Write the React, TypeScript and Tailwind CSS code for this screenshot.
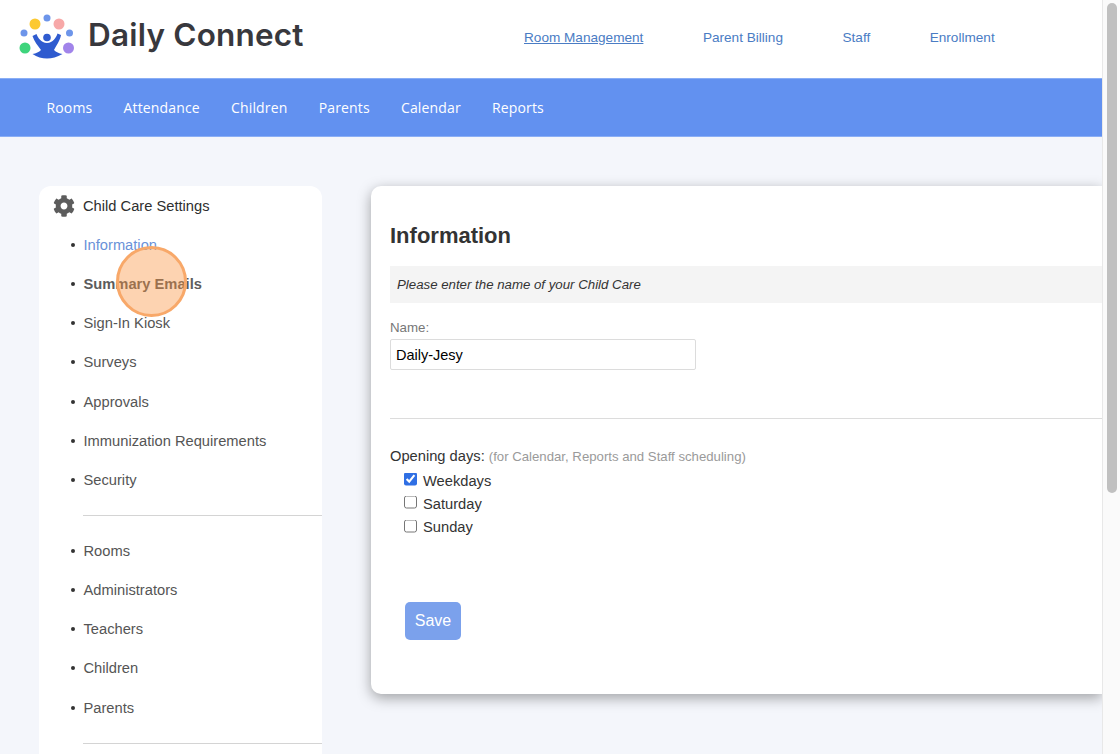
import React from "react";
import { FaCog } from "react-icons/fa";

const topLinks = [
  { t: "Room Management", cls: "underline" },
  { t: "Parent Billing", cls: "" },
  { t: "Staff", cls: "" },
  { t: "Enrollment", cls: "" },
];
const nav = ["Rooms", "Attendance", "Children", "Parents", "Calendar", "Reports"];
const group1 = ["Sign-In Kiosk", "Surveys", "Approvals", "Immunization Requirements", "Security"];
const group2 = ["Rooms", "Administrators", "Teachers", "Children", "Parents"];

function Logo() {
  return (
    <svg width="58" height="48" viewBox="0 0 58 48" className="shrink-0">
      <circle cx="16" cy="10" r="5.5" fill="#fcc931" />
      <circle cx="28" cy="4" r="3.500" fill="#6d95ea" />
      <circle cx="40" cy="10" r="5.5" fill="#f7a8a8" />
      <circle cx="5" cy="19" r="3.500" fill="#6d95ea" />
      <circle cx="50.500" cy="19" r="3.500" fill="#6d95ea" />
      <circle cx="6" cy="34" r="5.5" fill="#3ed47c" />
      <circle cx="49.500" cy="34" r="5.5" fill="#a184ea" />
      <circle cx="28" cy="23.500" r="3.800" fill="#2f5bcf" />
      <path d="M13.500 22 L17.500 20 C19 24 22 28.500 28 29 C34 28.500 37 24 38.500 19.500 L42 21 C41 27 37 32 35 36 C37 38 40 39.500 43.500 40 C38 43 33 44.500 28 44.500 C23 44.500 18 43 13.500 40 C17 39.500 20 38 22 36 C19 32 15 27 13.500 22 Z" fill="#2f5bcf" />
    </svg>
  );
}

function Item({ children, cls = "text-[#555]" }: { children: React.ReactNode; cls?: string }) {
  return (
    <li className="h-[39.200px] flex items-center">
      <span className="w-[31px] pl-[32px] shrink-0">
        <span className="block w-[4px] h-[4px] rounded-full bg-[#333] -ml-[0.500px]" />
      </span>
      <span className={`ml-[13px] text-[14.700px] -translate-x-[0.500px] ${cls}`}>{children}</span>
    </li>
  );
}

function Check({ label, checked }: { label: string; checked?: boolean }) {
  return (
    <label className="flex items-center h-[23.300px] pl-[14px]">
      <input
        type="checkbox"
        defaultChecked={checked}
        className="w-[13px] h-[13px] m-0 accent-[#2f6fe4] -translate-y-[1.500px]"
      />
      <span className="ml-[6px] text-[14.700px] text-[#333]">{label}</span>
    </label>
  );
}

export default function App() {
  return (
    <div className="h-[754px] w-[1120px] overflow-hidden flex bg-white font-['Liberation_Sans',Arial,sans-serif] relative">
      <div className="w-[1102px] shrink-0 bg-[#f4f6fb] flex flex-col">
        <header className="h-[78px] bg-white flex items-center shrink-0">
          <div className="ml-[19px] mt-[-3px]">
            <Logo />
          </div>
          <span className="ml-[11px] mt-[-8px] text-[31.500px] font-semibold text-[#38383d] font-['Inter','Noto_Sans',sans-serif] tracking-[0.2px] leading-none w-[214px] whitespace-nowrap">
            Daily Connect
          </span>
          <nav className="ml-[222px] flex gap-[59.500px] mt-[-2px]">
            {topLinks.map((l) => (
              <a key={l.t} className={`text-[13.600px] text-[#4a7cc4] ${l.cls}`}>
                {l.t}
              </a>
            ))}
          </nav>
        </header>
        <div className="h-[59px] bg-[#6291f0] flex items-center pl-[46.500px] gap-[31.200px] shrink-0 border-y border-[#8aaef5]">
          {nav.map((n) => (
            <span key={n} className="text-white text-[14px] font-['Open_Sans',sans-serif] tracking-[0.15px]">
              {n}
            </span>
          ))}
        </div>
        <div className="flex pt-[49px] pl-[39px] gap-[49px] items-start">
          <aside className="w-[283px] h-[640px] bg-white rounded-[12px] shrink-0">
            <div className="flex items-center h-[39.300px] pt-[1px] pl-[14px]">
              <FaCog className="text-[#5c5c5c] w-[22px] h-[22px] shrink-0" />
              <span className="ml-[8px] text-[14.700px] text-[#2e2e2e]">Child Care Settings</span>
            </div>
            <ul>
              <Item cls="text-[#6a92d8]">Information</Item>
              <Item cls="text-[#5c5c5c] font-bold">Summary Emails</Item>
              {group1.map((g) => (
                <Item key={g}>{g}</Item>
              ))}
            </ul>
            <hr className="ml-[44px] mt-[15.700px] mb-[15px] border-[#d4d4d4]" />
            <ul>
              {group2.map((g) => (
                <Item key={g}>{g}</Item>
              ))}
            </ul>
            <hr className="ml-[44px] mt-[16px] border-[#d4d4d4]" />
          </aside>
          <main className="flex-1 h-[508px] bg-white rounded-l-[10px] shadow-[0_4px_14px_rgba(0,0,0,0.35)] pl-[19px]">
            <h1 className="mt-[36px] text-[22px] leading-[27px] font-bold text-[#333]">Information</h1>
            <p className="mt-[17px] h-[37px] flex items-center pl-[7px] bg-[#f4f4f4] italic text-[13.250px] text-[#333]">
              Please enter the name of your Child Care
            </p>
            <div className="mt-[17px] text-[13.300px] leading-[16px] text-[#777]">Name:</div>
            <input
              readOnly
              value="Daily-Jesy"
              className="mt-[3px] block w-[306px] h-[31px] border border-[#dcdcdc] rounded-[2px] px-[5px] text-[14.500px] text-black bg-white outline-none"
            />
            <hr className="mt-[48px] border-[#dcdcdc]" />
            <div className="mt-[28px] leading-[18px]">
              <span className="text-[14.700px] text-[#333]">Opening days: </span>
              <span className="text-[13.200px] text-[#9a9a9a]">(for Calendar, Reports and Staff scheduling)</span>
            </div>
            <div className="mt-[3px]">
              <Check label="Weekdays" checked />
              <Check label="Saturday" />
              <Check label="Sunday" />
            </div>
            <button className="mt-[63px] ml-[15px] block w-[56px] h-[38px] rounded-[5px] bg-[#7ba1ec] text-white text-[16px]">
              Save
            </button>
          </main>
        </div>
      </div>
      <div className="flex-1 bg-[#fafafa] border-l border-[#e8e8e8] pt-[3px] pl-[4px]">
        <div className="w-[10px] h-[490px] rounded-full bg-[#c0c0c0]" />
      </div>
      <div className="absolute left-[116px] top-[246px] w-[71px] h-[71px] rounded-full bg-[#fb923c]/40 border-[3px] border-[#f8a869]" />
    </div>
  );
}
